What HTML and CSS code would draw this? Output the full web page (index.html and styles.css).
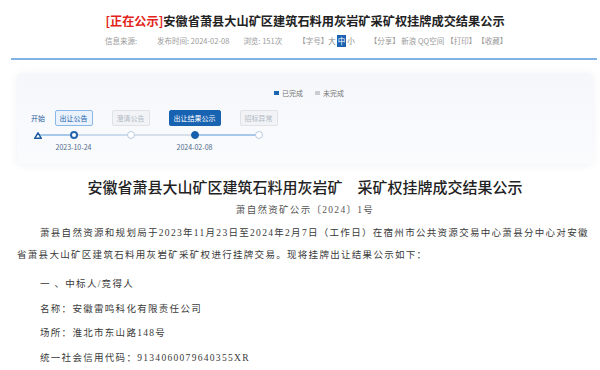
FILE: index.html
```html
<!DOCTYPE html>
<html lang="zh-CN">
<head>
<meta charset="utf-8">
<title>安徽省萧县大山矿区建筑石料用灰岩矿采矿权挂牌成交结果公示</title>
<link rel="stylesheet" href="styles.css">
</head>
<body>
<div class="page">
  <h1 class="title"><span class="tag">[正在公示]</span>安徽省萧县大山矿区建筑石料用灰岩矿采矿权挂牌成交结果公示</h1>
  <div class="meta">
    <span class="m-src">信息来源:</span>
    <span class="m-date">发布时间: 2024-02-08</span>
    <span class="m-views">浏览: 151次</span>
    <span class="m-size">【字号】<span class="fs">大</span><span class="fs on">中</span><span class="fs">小</span></span>
    <span class="m-share">【分享】 新浪 QQ空间</span>
    <span class="m-print">【打印】</span>
    <span class="m-fav">【收藏】</span>
  </div>
  <div class="rule"></div>

  <div class="card">
    <div class="legend">
      <span class="lg done">已完成</span>
      <span class="lg todo">未完成</span>
    </div>
    <div class="steps">
      <div class="step start">
        <span class="start-label">开始</span>
        <div class="node-row seg-start">
          <svg class="tri" width="8" height="7" viewBox="0 0 8 7"><polygon points="4,0.9 7.3,6.3 0.7,6.3" fill="#fff" stroke="#1d5aa3" stroke-width="1.5" stroke-linejoin="round"/></svg>
        </div>
      </div>
      <div class="step">
        <span class="btn cur">出让公告</span>
        <div class="node-row seg-1"><i class="dot ring"></i></div>
        <span class="date">2023-10-24</span>
      </div>
      <div class="step">
        <span class="btn off">澄清公告</span>
        <div class="node-row seg-2"><i class="dot"></i></div>
      </div>
      <div class="step">
        <span class="btn active">出让结果公示</span>
        <div class="node-row seg-3"><i class="dot fill"></i></div>
        <span class="date">2024-02-08</span>
      </div>
      <div class="step">
        <span class="btn off">招标异常</span>
        <div class="node-row seg-4"><i class="dot"></i></div>
      </div>
    </div>
  </div>

  <h2 class="doc-title">安徽省萧县大山矿区建筑石料用灰岩矿　采矿权挂牌成交结果公示</h2>
  <p class="doc-no">萧自然资矿公示〔2024〕1号</p>
  <p class="para">萧县自然资源和规划局于2023年11月23日至2024年2月7日（工作日）在宿州市公共资源交易中心萧县分中心对安徽<br>省萧县大山矿区建筑石料用灰岩矿采矿权进行挂牌交易。现将挂牌出让结果公示如下：</p>
  <div class="items">
    <p class="item">一 、中标人/竞得人</p>
    <p class="item">名称：安徽雷鸣科化有限责任公司</p>
    <p class="item">场所：淮北市东山路148号</p>
    <p class="item">统一社会信用代码：9134060079640355XR</p>
  </div>
</div>
</body>
</html>
```

FILE: styles.css
```css
html, body {
  margin: 0;
  background: #fff;
}
body {
  font-family: "Noto Sans CJK SC", "Noto Sans", sans-serif;
  color: #333;
  overflow: hidden;
}
.page {
  margin: 0 7px 0 17px;
}
.title {
  margin: 12px 0 0;
  font-size: 12.2px;
  line-height: 18px;
  font-weight: 700;
  color: #222;
  text-align: center;
  white-space: nowrap;
}
.tag {
  color: #e2231a;
}
.meta {
  display: flex;
  margin-top: 5px;
  padding-left: 88px;
  height: 12px;
  line-height: 12px;
  font-size: 7.5px;
  color: #9a9a9a;
  white-space: nowrap;
}
.m-date { margin-left: 20px; }
.m-views { margin-left: 14px; }
.m-size { margin-left: 16px; display: flex; }
.fs { color: #888; }
.fs.on {
  background: #1d62b0;
  color: #fff;
  padding: 0 1px;
  margin: 0 1px;
}
.m-share { margin-left: 15px; }
.m-print { margin-left: 2px; }
.m-fav { margin-left: 1px; }

.rule {
  height: 2px;
  margin: 11px -4px 0 -6px;
  background: #80b3e4;
}

.card {
  margin-top: 13px;
  padding: 15px 0 12px;
  border-radius: 5px;
  background: linear-gradient(#f5f7fa, #fafbfd);
  box-shadow: 0 1px 8px rgba(60, 80, 110, 0.08);
}
.legend {
  display: flex;
  gap: 12px;
  padding-left: 257px;
  height: 10px;
  line-height: 10px;
  font-size: 7px;
  color: #777;
}
.lg {
  display: flex;
  align-items: center;
  gap: 3px;
}
.lg::before {
  content: "";
  width: 5px;
  height: 4px;
  background: #1a64b0;
}
.lg.todo::before {
  background: #c9cdd3;
}

.steps {
  display: flex;
  align-items: flex-start;
  margin-top: 12px;
  padding-left: 14px;
}
.step {
  display: flex;
  flex-direction: column;
  align-items: center;
  padding: 0 9.5px;
}
.step.start {
  padding: 0;
}
.start-label {
  height: 16px;
  line-height: 16px;
  font-size: 7px;
  color: #2a5d9c;
}
.btn {
  box-sizing: border-box;
  height: 16px;
  line-height: 14px;
  padding: 0 4px;
  font-size: 7px;
  border: 1px solid;
  border-radius: 2px;
  white-space: nowrap;
}
.btn.cur {
  background: #eaf3fd;
  border-color: #8ab8e6;
  color: #2360a8;
}
.btn.off {
  background: #f1f3f6;
  border-color: #dfe3e8;
  color: #b3b9c2;
}
.btn.active {
  background: #1762b1;
  border-color: #1762b1;
  color: #fff;
}
.node-row {
  align-self: stretch;
  margin: 1px -9.5px 0;
  height: 16px;
  display: flex;
  align-items: center;
  justify-content: center;
  background: linear-gradient(to right, var(--l) 50%, var(--r) 50%) center / 100% 2px no-repeat;
}
.start .node-row { margin: 1px 0 0; }
.seg-start { --l: transparent; --r: #a8c8e9; }
.seg-1 { --l: #a8c8e9; --r: #cddcec; }
.seg-2 { --l: #cddcec; --r: #d8e1eb; }
.seg-3 { --l: #d8e1eb; --r: #a8c8e9; }
.seg-4 { --l: #a8c8e9; --r: transparent; }
.tri { display: block; }
.dot {
  display: block;
  box-sizing: border-box;
  width: 8px;
  height: 8px;
  border-radius: 50%;
  background: #fff;
  border: 1px solid #b6cbe1;
}
.dot.ring {
  border: 2px solid #2466ad;
}
.dot.fill {
  background: #1560ae;
  border-color: #1560ae;
}
.date {
  height: 9px;
  line-height: 9px;
  font-size: 7px;
  color: #4f6889;
  white-space: nowrap;
}

.doc-title {
  margin: 12px 0 0;
  font-size: 15px;
  line-height: 22px;
  font-weight: 500;
  color: #222;
  text-align: center;
  white-space: nowrap;
}
.doc-no,
.para,
.item {
  font-family: "Liberation Serif", "Noto Sans CJK SC", serif;
  font-size: 9.5px;
  letter-spacing: 1.3px;
  white-space: nowrap;
}
.doc-no {
  margin: 5px 0 0;
  line-height: 14px;
  color: #555;
  text-align: center;
}
.para {
  margin: 5px 0 0;
  line-height: 22px;
  text-indent: 23px;
  color: #3a3a3a;
}
.items {
  margin-top: 6px;
  padding-left: 23px;
}
.item {
  margin: 0;
  line-height: 24.5px;
  color: #3a3a3a;
}
```
